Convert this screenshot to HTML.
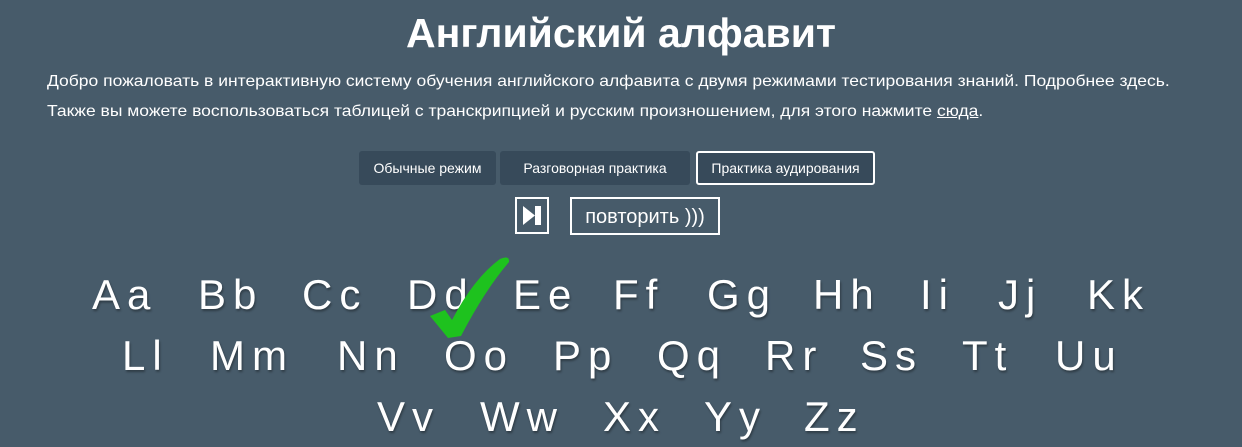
<!DOCTYPE html>
<html><head><meta charset="utf-8"><style>
body{margin:0;width:1242px;height:447px;background:#475b6a;font-family:"Liberation Sans","DejaVu Sans",sans-serif;color:#fff;position:relative;overflow:hidden}
h1{position:absolute;top:8px;left:0;width:1242px;text-align:center;margin:0;font-size:41px;font-weight:bold;line-height:50px}
.p{position:absolute;left:47px;font-size:16px;white-space:nowrap;line-height:20px;transform:scaleX(1.093);transform-origin:0 0}
.btn{position:absolute;top:151px;height:34px;background:#374a5a;border-radius:3px;font-size:14px;line-height:34px;text-align:center;box-sizing:border-box}
.l{position:absolute;font-size:42px;letter-spacing:7px;line-height:1;text-shadow:1px 2px 2px rgba(0,0,0,.35)}
</style></head><body>
<h1>Английский алфавит</h1>
<div class="p" style="top:72px">Добро пожаловать в интерактивную систему обучения английского алфавита с двумя режимами тестирования знаний. Подробнее здесь.</div>
<div class="p" style="top:102px">Также вы можете воспользоваться таблицей с транскрипцией и русским произношением, для этого нажмите <u>сюда</u>.</div>
<div class="btn" style="left:359px;width:137px">Обычные режим</div>
<div class="btn" style="left:500px;width:190px">Разговорная практика</div>
<div class="btn" style="left:696px;width:179px;border:2px solid #fff;line-height:30px">Практика аудирования</div>
<div style="position:absolute;left:515px;top:197px;width:34px;height:37px;border:2px solid #fff;box-sizing:border-box">
<svg width="30" height="33" viewBox="0 0 30 33"><path d="M6 7 L18 16.5 L6 26Z" fill="#fff"/><rect x="18" y="7" width="6" height="19" fill="#fff"/></svg></div>
<div style="position:absolute;left:570px;top:197px;width:150px;height:38px;border:2px solid #fff;box-sizing:border-box;font-size:20px;line-height:36px;text-align:center">повторить )))</div>
<div class="l" style="left:92px;top:274px">Aa</div>
<div class="l" style="left:198px;top:274px">Bb</div>
<div class="l" style="left:302px;top:274px">Cc</div>
<div class="l" style="left:407px;top:274px">Dd</div>
<div class="l" style="left:513px;top:274px">Ee</div>
<div class="l" style="left:613px;top:274px">Ff</div>
<div class="l" style="left:707px;top:274px">Gg</div>
<div class="l" style="left:813px;top:274px">Hh</div>
<div class="l" style="left:920px;top:274px">Ii</div>
<div class="l" style="left:998px;top:274px">Jj</div>
<div class="l" style="left:1087px;top:274px">Kk</div>
<div class="l" style="left:122px;top:335px">Ll</div>
<div class="l" style="left:210px;top:335px">Mm</div>
<div class="l" style="left:337px;top:335px">Nn</div>
<div class="l" style="left:444px;top:335px">Oo</div>
<div class="l" style="left:553px;top:335px">Pp</div>
<div class="l" style="left:657px;top:335px">Qq</div>
<div class="l" style="left:765px;top:335px">Rr</div>
<div class="l" style="left:860px;top:335px">Ss</div>
<div class="l" style="left:962px;top:335px">Tt</div>
<div class="l" style="left:1055px;top:335px">Uu</div>
<div class="l" style="left:377px;top:396px">Vv</div>
<div class="l" style="left:480px;top:396px">Ww</div>
<div class="l" style="left:603px;top:396px">Xx</div>
<div class="l" style="left:704px;top:396px">Yy</div>
<div class="l" style="left:804px;top:396px">Zz</div>
<svg style="position:absolute;left:428px;top:254px" width="84" height="86" viewBox="0 0 84 86"><path d="M2 62 L17 56 L24 66 Q46 24 72 5 Q82 1 81 8 Q57 36 33 82 L20 84 Z" fill="#1ec21e"/></svg>
</body></html>
